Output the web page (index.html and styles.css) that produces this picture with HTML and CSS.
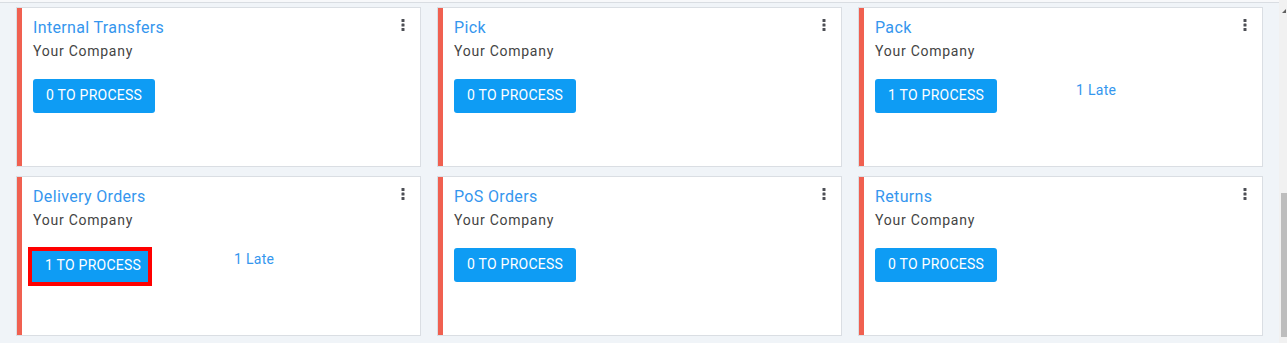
FILE: index.html
```html
<!DOCTYPE html>
<html>
<head>
<meta charset="utf-8">
<link rel="stylesheet" href="styles.css">
</head>
<body>
<div class="page">
  <div class="main">
    <div class="topbar"></div>
    <div class="grid">
      <div class="card">
        <div class="bar"></div>
        <div class="content">
          <div class="head">
            <div>
              <div class="title">Internal Transfers</div>
              <div class="company">Your Company</div>
            </div>
            <svg class="kebab" width="4" height="13" viewBox="0 0 4 13"><rect x="0.5" y="0" width="3" height="3" rx="0.6"/><rect x="0.5" y="4.5" width="3" height="3" rx="0.6"/><rect x="0.5" y="9" width="3" height="3" rx="0.6"/></svg>
          </div>
          <div class="body">
            <div><span class="btn">0 TO PROCESS</span></div>
            <div></div>
          </div>
        </div>
      </div>
      <div class="card">
        <div class="bar"></div>
        <div class="content">
          <div class="head">
            <div>
              <div class="title">Pick</div>
              <div class="company">Your Company</div>
            </div>
            <svg class="kebab" width="4" height="13" viewBox="0 0 4 13"><rect x="0.5" y="0" width="3" height="3" rx="0.6"/><rect x="0.5" y="4.5" width="3" height="3" rx="0.6"/><rect x="0.5" y="9" width="3" height="3" rx="0.6"/></svg>
          </div>
          <div class="body">
            <div><span class="btn">0 TO PROCESS</span></div>
            <div></div>
          </div>
        </div>
      </div>
      <div class="card">
        <div class="bar"></div>
        <div class="content">
          <div class="head">
            <div>
              <div class="title">Pack</div>
              <div class="company">Your Company</div>
            </div>
            <svg class="kebab" width="4" height="13" viewBox="0 0 4 13"><rect x="0.5" y="0" width="3" height="3" rx="0.6"/><rect x="0.5" y="4.5" width="3" height="3" rx="0.6"/><rect x="0.5" y="9" width="3" height="3" rx="0.6"/></svg>
          </div>
          <div class="body">
            <div><span class="btn">1 TO PROCESS</span></div>
            <div class="late">1 Late</div>
          </div>
        </div>
      </div>
      <div class="card">
        <div class="bar"></div>
        <div class="content">
          <div class="head">
            <div>
              <div class="title">Delivery Orders</div>
              <div class="company">Your Company</div>
            </div>
            <svg class="kebab" width="4" height="13" viewBox="0 0 4 13"><rect x="0.5" y="0" width="3" height="3" rx="0.6"/><rect x="0.5" y="4.5" width="3" height="3" rx="0.6"/><rect x="0.5" y="9" width="3" height="3" rx="0.6"/></svg>
          </div>
          <div class="body">
            <div><span class="btn btn-marked">1 TO PROCESS</span></div>
            <div class="late">1 Late</div>
          </div>
        </div>
      </div>
      <div class="card">
        <div class="bar"></div>
        <div class="content">
          <div class="head">
            <div>
              <div class="title">PoS Orders</div>
              <div class="company">Your Company</div>
            </div>
            <svg class="kebab" width="4" height="13" viewBox="0 0 4 13"><rect x="0.5" y="0" width="3" height="3" rx="0.6"/><rect x="0.5" y="4.5" width="3" height="3" rx="0.6"/><rect x="0.5" y="9" width="3" height="3" rx="0.6"/></svg>
          </div>
          <div class="body">
            <div><span class="btn">0 TO PROCESS</span></div>
            <div></div>
          </div>
        </div>
      </div>
      <div class="card">
        <div class="bar"></div>
        <div class="content">
          <div class="head">
            <div>
              <div class="title">Returns</div>
              <div class="company">Your Company</div>
            </div>
            <svg class="kebab" width="4" height="13" viewBox="0 0 4 13"><rect x="0.5" y="0" width="3" height="3" rx="0.6"/><rect x="0.5" y="4.5" width="3" height="3" rx="0.6"/><rect x="0.5" y="9" width="3" height="3" rx="0.6"/></svg>
          </div>
          <div class="body">
            <div><span class="btn">0 TO PROCESS</span></div>
            <div></div>
          </div>
        </div>
      </div>
    </div>
  </div>
  <div class="scrollbar">
    <div class="arrow"></div>
    <div class="thumb"></div>
  </div>
</div>
</body>
</html>
```

FILE: styles.css
```css
html, body {
  margin: 0;
  padding: 0;
}
body {
  background: #f0f4f8;
  font-family: Roboto, "Liberation Sans", sans-serif;
  overflow: hidden;
}
.page {
  display: flex;
  height: 343px;
}
.main {
  flex: 1;
  min-width: 0;
}
.topbar {
  height: 2px;
  background: #f7f8fa;
  border-bottom: 1px solid #d9dde2;
}
.grid {
  display: grid;
  grid-template-columns: repeat(3, 405px);
  grid-auto-rows: 160px;
  column-gap: 16px;
  row-gap: 9px;
  padding: 4px 16px 0 16px;
}
.card {
  display: flex;
  background: #ffffff;
  border: 1px solid #dadee3;
  box-sizing: border-box;
}
.bar {
  width: 5px;
  background: #f06050;
  flex: none;
}
.content {
  flex: 1;
  padding: 8px 15px 0 11px;
}
.head {
  display: flex;
  justify-content: space-between;
  align-items: flex-start;
}
.title {
  font-size: 16px;
  line-height: 24px;
  letter-spacing: 0.35px;
  color: #3596ee;
}
.company {
  font-size: 14px;
  line-height: 21px;
  letter-spacing: 0.75px;
  padding-top: 1px;
  color: #444444;
}
.kebab {
  margin-top: 3px;
  fill: #4d4f55;
  display: block;
}
.body {
  display: grid;
  grid-template-columns: 201px 1fr;
  margin-top: 17px;
}
.btn {
  display: inline-block;
  white-space: nowrap;
  background: #0e9cf4;
  color: #ffffff;
  font-size: 14px;
  line-height: 20px;
  letter-spacing: 0.25px;
  padding: 6px 13px 8px 13px;
  border-radius: 3px;
}
.btn-marked {
  box-sizing: border-box;
  outline: 4px solid #ff0000;
  border-radius: 0;
  width: 116px;
  height: 31px;
  padding: 4px 0 0 13px;
  margin: 3px 0 0 -1px;
}
.late {
  font-size: 14px;
  line-height: 21px;
  letter-spacing: 0.3px;
  padding-top: 1px;
  color: #3596ee;
}
.scrollbar {
  width: 8px;
  flex: none;
  background: #f1f1f1;
  display: flex;
  flex-direction: column;
  align-items: flex-end;
}
.arrow {
  margin-top: 9px;
  width: 0;
  height: 0;
  border-left: 4px solid transparent;
  border-bottom: 4px solid #606060;
  margin-right: 1px;
}
.thumb {
  margin-top: auto;
  margin-bottom: 6px;
  width: 6px;
  height: 144px;
  background: #bdbdbd;
}
```
